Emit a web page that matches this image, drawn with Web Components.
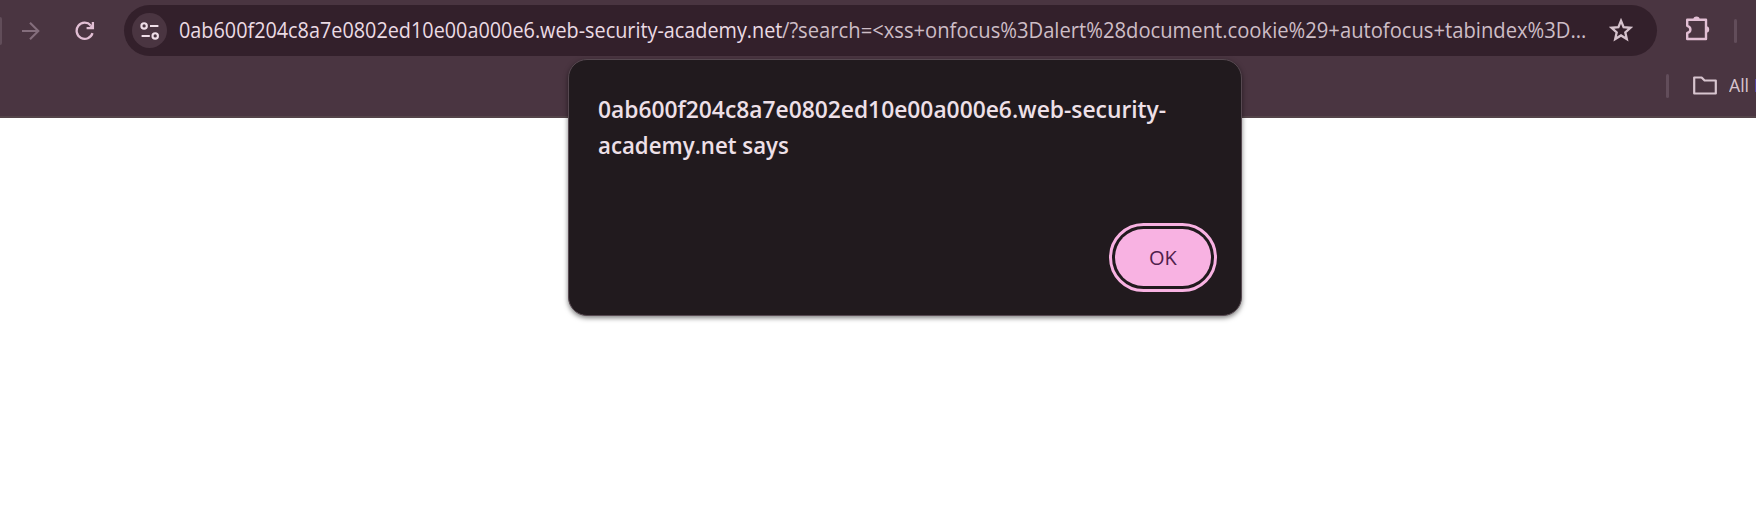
<!DOCTYPE html>
<html lang="en"><head><meta charset="utf-8"><title>Browser dialog</title>
<style>html,body{margin:0;height:100%;overflow:hidden;background:#fff;font-family:"Open Sans","Noto Sans",sans-serif}</style></head>
<body><browser-window></browser-window>
<script>
const define=(name,html,Base=HTMLElement)=>customElements.define(name,class extends Base{
  constructor(){super();const t=document.createElement('template');t.innerHTML=html;this.attachShadow({mode:'open'}).append(t.content.cloneNode(true));}
});
/* One line of text, condensed horizontally to the width attribute. */
class FitText extends HTMLElement{
  constructor(){super();this.attachShadow({mode:'open'}).innerHTML='<style>:host{display:block;white-space:nowrap;flex:none}span{display:inline-block;transform-origin:0 50%}</style><span><slot></slot></span>';}
  connectedCallback(){this.fit();document.fonts.ready.then(()=>this.fit());}
  fit(){const w=+this.getAttribute('width'),s=this.shadowRoot.querySelector('span');this.style.width=w+'px';const n=s.offsetWidth;if(n)s.style.transform=`scaleX(${w/n})`;}
}
customElements.define('fit-text',FitText);
define('back-edge',`<style>:host{display:block;flex:none;width:2px;height:28px;background:#614d59;border-radius:0 2px 2px 0}</style>`);
define('icon-forward',`<style>:host{display:block;width:20px;height:20px}svg{display:block}</style><svg width="20" height="20" fill="none" stroke="#846e7c" stroke-width="2.1"><path d="M1 10H17.5M9 1.7l8.3 8.3-8.3 8.3"/></svg>`);
define('icon-reload',`<style>:host{display:block;width:20px;height:20px}svg{display:block}</style><svg width="20" height="20" fill="none" stroke="#e2bfd4" stroke-width="2.3"><path d="M15.8 4.4A8.1 8.1 0 1 0 17.5 12.2"/><path d="M17.9 1V7.2H11.6"/><path d="M18.5 2V7.5H13z" fill="#e2bfd4" stroke="none"/></svg>`);
define('icon-tune',`<style>:host{display:grid;place-items:center;width:35px;height:35px;border-radius:50%;background:#4a3541}</style><svg width="20" height="20" fill="none" stroke="#efdfe8" stroke-width="2.1"><circle cx="4.1" cy="4.9" r="2.7"/><path d="M10 5H18.4M1.6 15H9.8"/><circle cx="15.2" cy="14.9" r="2.7"/></svg>`);
define('icon-star',`<style>:host{display:block;width:24px;height:24px}svg{display:block}</style><svg width="24" height="24" fill="none" stroke="#d5c2cc" stroke-width="2.3"><path d="M12 2.8l2.6 6.4 6.8.6-5.1 4.5 1.5 6.7-5.8-3.6-5.8 3.6 1.5-6.7-5.1-4.5 6.8-.6z"/></svg>`);
define('icon-extension',`<style>:host{display:block;width:26px;height:26px}svg{display:block}</style><svg width="26" height="26"><path d="M2.2 4.8H21V24H2.2V18Q5.4 17.2 5.4 14.4Q5.4 11.6 2.2 10.8Z" fill="none" stroke="#e2bfd4" stroke-width="2.4" stroke-linejoin="round"/><path d="M8.3 4.8a3.2 3.2 0 0 1 6.4 0zM21 11.2a3.2 3.2 0 0 1 0 6.4z" fill="#e2bfd4"/></svg>`);
define('icon-folder',`<style>:host{display:block;flex:none;width:24px;height:19px}svg{display:block}</style><svg width="24" height="19" fill="none" stroke="#d8c5cf" stroke-width="2.2" stroke-linejoin="round"><path d="M1.2 1.5H8.6l3 3H22.8V17.5H1.2Z"/></svg>`);
define('tool-divider',`<style>:host{display:block;flex:none;width:3px;height:24px;border-radius:2px;background:#624d5a}</style>`);
define('address-bar',`<style>:host{display:flex;align-items:center;box-sizing:border-box;width:1533px;height:51px;border-radius:26px;background:#33202b;padding-left:8px;font-size:21px;line-height:30px;color:#ebdbe4}
icon-tune{flex:none;margin-right:12px}fit-text{margin-top:-1px}.path{color:#cdbdc6}icon-star{margin:-2px 0 0 23px;flex:none}</style>
<icon-tune></icon-tune><fit-text width="603"><slot name="host"></slot></fit-text><fit-text class="path" width="804"><slot name="path"></slot></fit-text><icon-star></icon-star>`);
define('browser-toolbar',`<style>:host{display:block;box-sizing:border-box;height:118px;background:#4a3541;border-bottom:2px solid #544449;padding-top:5px}
.row{display:flex;align-items:center;height:51px}.marks{display:flex;align-items:center;height:60px;padding-left:1666px}
icon-forward{margin-left:19px}icon-reload{margin-left:34px}address-bar{margin-left:29px;flex:none}icon-extension{margin:-5px 0 0 28px}.row tool-divider{margin-left:23px}
icon-folder{margin:-1px 0 0 24px}.all{margin:-4px 0 0 12px;font-size:18.5px;color:#d8c5cf}.cut{flex:none;width:1px;height:13px;margin:-2px 0 0 6px;background:#5445a0}</style>
<div class="row"><back-edge></back-edge><icon-forward></icon-forward><icon-reload></icon-reload><address-bar><span slot="host">0ab600f204c8a7e0802ed10e00a000e6.web-security-academy.net</span><span slot="path">/?search=&lt;xss+onfocus%3Dalert%28document.cookie%29+autofocus+tabindex%3D...</span></address-bar><icon-extension></icon-extension><tool-divider></tool-divider></div>
<div class="marks"><tool-divider></tool-divider><icon-folder></icon-folder><fit-text class="all" width="20">All</fit-text><div class="cut"></div></div>`);
define('ok-button',`<style>:host{display:block;padding:3px;border:3px solid #f8b2e2;border-radius:35px}button{all:unset;display:grid;place-items:center;width:96px;height:57px;border-radius:29px;background:#f8b2e2;color:#50204b;font-size:20px;font-weight:500}</style><button><fit-text width="28"><slot></slot></fit-text></button>`);
define('alert-dialog',`<style>:host{display:flex;flex-direction:column;box-sizing:border-box;width:674px;height:257px;padding:31px 24px 23px 29px;border-radius:19px;background:#211a1e;border:1px solid #574951;box-shadow:0 2px 5px rgba(0,0,0,.5);font-size:24px;line-height:36px;font-weight:600;color:#eee0e8}
ok-button{align-self:flex-end;margin-top:auto}</style><slot></slot><ok-button>OK</ok-button>`);
define('browser-window',`<style>:host{display:block;position:relative;height:506px;overflow:hidden;background:#fff}alert-dialog{position:absolute;left:568px;top:59px}</style>
<browser-toolbar></browser-toolbar><alert-dialog><fit-text width="568">0ab600f204c8a7e0802ed10e00a000e6.web-security-</fit-text><fit-text width="191">academy.net says</fit-text></alert-dialog>`);
</script></body></html>
